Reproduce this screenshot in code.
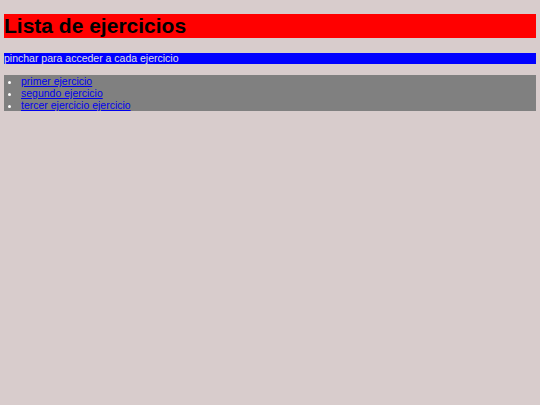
export default function App() {
    return (
        <div className="min-h-[405px] bg-[#d8cccc] px-[4px] pt-[14px] font-['Liberation_Sans',Arial,sans-serif]">
            <h1 className="bg-[#ff0000] text-[21px] font-bold leading-[24px] text-black">
                Lista de ejercicios
            </h1>
            <p className="mt-[15px] bg-[#0000ff] text-[10.5px] leading-[11px] text-[#e0e0e0]">
                pinchar para acceder a cada ejercicio
            </p>
            <ul className="mt-[11px] list-disc bg-[#808080] pl-[17px] text-[10.5px] leading-[12px] text-white">
                <li>
                    <a href="#" className="text-[#0000ee] underline">primer ejercicio</a>
                </li>
                <li>
                    <a href="#" className="text-[#0000ee] underline">segundo ejercicio</a>
                </li>
                <li>
                    <a href="#" className="text-[#0000ee] underline">tercer ejercicio ejercicio</a>
                </li>
            </ul>
        </div>
    );
}
